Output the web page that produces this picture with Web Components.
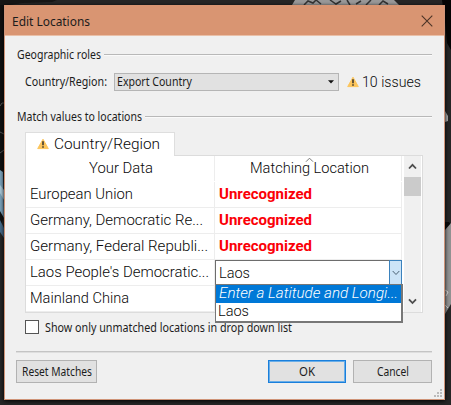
<!DOCTYPE html>
<html lang="en">
<head>
<meta charset="utf-8">
<title>Edit Locations</title>
<style>
html, body { margin: 0; width: 451px; height: 405px; overflow: hidden; background: #262626; }
body { position: relative; font-family: "Noto Sans", sans-serif; font-size: 12px; color: #1c1c1c; }
</style>
</head>
<body>
<map-backdrop></map-backdrop>
<dialog-window></dialog-window>
<script>
// Single line of text, condensed or widened to an exact width.
class FitText extends HTMLElement {
  connectedCallback() {
    const r = this.attachShadow({ mode: 'open' });
    const w = +this.getAttribute('w'), s = this.getAttribute('size') || 12.5;
    r.innerHTML = `<style>
      :host { display: block; flex: none; width: ${w}px; height: 14px; line-height: 14px; font-size: ${s}px; white-space: nowrap; }
      :host([tab]) , :host([cell]) { font-family: Roboto, sans-serif; font-weight: 350; color: #080808; }
      :host([red]) { color: #fb0007; font-weight: 700; }
      :host([hot]) { color: #fff; font-style: italic; }
      span { display: inline-block; transform-origin: 0 50%; }
    </style><span><slot></slot></span>`;
    const sp = r.querySelector('span');
    sp.style.transform = `scaleX(${w / sp.getBoundingClientRect().width})`;
  }
}
// Helper for elements whose shadow tree is static markup.
const define = (name, html) => customElements.define(name, class extends HTMLElement {
  connectedCallback() {
    if (!this.shadowRoot) this.attachShadow({ mode: 'open' }).innerHTML = html;
  }
});

define('map-backdrop', `<style>:host{position:absolute;inset:0} svg{display:block}</style>
<svg width="451" height="405">
  <path d="M0 0H4V216L0 228Z" fill="#101010"/>
  <path d="M0 0H57L52 2L22 3L10 5H0Z" fill="#161616"/>
  <path d="M0 106L2 103L4 103M0 132L4 134M0 153L4 150" stroke="#555" fill="none"/>
  <path d="M0 170L3 172L4 218L0 211Z" fill="#7aa0b8"/><path d="M0 185L4 190V200L0 193Z" fill="#a9c6d6"/>
  <path d="M0 220L4 228V238L0 232Z" fill="#466a88"/>
  <path d="M292 5L295 0H394L399 5Z" fill="#999"/>
  <path d="M304 5L308 1L313 3L316 0L321 4M330 0L336 4L341 1M347 0L350 5M356 4L361 1M366 5L371 0M379 5L383 1L388 4" stroke="#333" stroke-width="1.5" fill="none"/>
  <path d="M442 0H451V50L447 43L445 22Z" fill="#050505"/>
  <path d="M445 111L448 116L448 121L445 122Z" fill="#aaa"/>
  <path d="M445 222H449L451 225L447 230H445Z" fill="#080808"/>
  <path d="M445 230L451 223V304L445 314Z" fill="#929292"/>
  <path d="M445 290L448 292L446 296M445 305L448 308" stroke="#ddd" fill="none"/>
</svg>`);

define('warn-icon', `<style>:host{display:block;flex:none;width:12px;height:12px} svg{display:block}</style>
<svg width="12" height="12" viewBox="0 0 12 12"><path d="M6 1.2L11.3 10.6H.7Z" fill="#fcc55c" stroke="#fcc55c" stroke-width="1" stroke-linejoin="round"/><path d="M6 3.2V7.2M6 8.3V9.8" stroke="#33302a" stroke-width="1.5"/></svg>`);

define('group-title', `<style>
:host{display:flex;align-items:center;gap:3px;height:16px;margin:0 12px 0 12px}
i{flex:1;height:1px;background:#b8b8b8;box-shadow:0 1px #fafafa}</style><slot></slot><i></i>`);

define('push-button', `<style>
:host{display:flex;box-sizing:border-box;height:23px;border:1px solid #b2b2b2;background:#e1e1e1;align-items:center;justify-content:center}
:host([primary]){border:1px solid #1a7fdb;box-shadow:inset 0 0 0 1px #6aaee8}</style><slot></slot>`);

define('title-bar', `<style>
:host{display:flex;background:#d99572;justify-content:space-between;align-items:center;padding:2px 11px 0 7px;box-sizing:border-box;height:31px;border-bottom:1px solid #e9c0a8}
svg{display:block}</style>
<fit-text w="78" size="13">Edit Locations</fit-text>
<svg width="12" height="12"><path d="M.7 .7L11.3 11.3M11.3 .7L.7 11.3" stroke="#4c3427" stroke-width="1.1"/></svg>`);

define('role-select', `<style>
:host{display:flex;box-sizing:border-box;width:225px;height:18px;border:1px solid #b5b5b5;background:#e1e1e1;align-items:center;justify-content:space-between;padding:0 4px 0 2px}</style>
<fit-text w="75">Export Country</fit-text><svg width="6" height="4"><path d="M0 .3H6L3 3.6Z" fill="#111"/></svg>`);

define('scroll-bar', `<style>
:host{display:flex;flex-direction:column;box-sizing:border-box;width:17px;height:156px;background:#f0f0f0;align-items:center;padding:7px 0 7px}
i{width:17px;height:19px;background:#cbcbcb;margin-top:7px;margin-bottom:auto} svg{display:block;flex:none}</style>
<svg width="9" height="7"><path d="M1 5.5L4.5 1.8L8 5.5" fill="none" stroke="#4d4d4d" stroke-width="1.8"/></svg><i></i>
<svg width="9" height="7"><path d="M1 1.3L4.5 5L8 1.3" fill="none" stroke="#4d4d4d" stroke-width="1.8"/></svg>`);

define('data-row', `<style>
:host{display:grid;grid-template-columns:189px 187px;height:25px;border-bottom:1px solid #ededed}
div{display:flex;align-items:center;box-sizing:border-box;padding-left:4px;border-right:1px solid #ededed;min-width:0}
div:first-child{padding-left:5.5px}
:host([head]){border-bottom-color:#fff}:host([head]) div{justify-content:center;padding:1px 0 0 2px}</style>
<div><slot></slot></div><div><slot name="match"></slot></div>`);

define('combo-cell', `<style>
:host{position:relative;display:block;margin-left:-4px;width:187px;height:26px;box-sizing:border-box;flex:none;margin-right:-1px}
.box{display:flex;box-sizing:border-box;height:26px;border:1px solid #6d6d6d;background:#fff;align-items:center;justify-content:space-between;padding-left:3px}
.arrow{width:13px;height:26px;box-sizing:border-box;border:1px solid #3b82bd;background:#cce4f7;margin-right:-1px;display:grid;place-items:center}
.list{position:absolute;left:0;top:24px;width:188px;height:39px;box-sizing:border-box;border:1px solid #777;border-right-width:2px;border-bottom-width:2px;background:#fff;z-index:3}
.opt{height:18px;display:flex;align-items:center;padding-left:2px}.hot{background:#0078d7;padding-left:3px;height:18px}</style>
<div class="box"><fit-text cell w="31" size="15">Laos</fit-text><div class="arrow"><svg width="8" height="6"><path d="M.7 1L4 4.5L7.3 1" fill="none" stroke="#4c6274" stroke-width="1"/></svg></div></div>
<div class="list"><div class="opt hot"><fit-text cell hot w="179" size="14.5">Enter a Latitude and Longi...</fit-text></div><div class="opt"><fit-text cell w="31" size="14.5">Laos</fit-text></div></div>`);

define('location-table', `<style>
:host{display:block;margin-left:20px;width:398px}
.tab{display:flex;align-items:center;gap:5px;box-sizing:border-box;width:150px;height:23px;background:#fff;border:1px solid #dedede;border-bottom:0;padding:0 0 0 11px}
.grid{position:relative;display:flex;box-sizing:border-box;height:158px;border:1px solid #dcdcdc;background:#fff;justify-content:space-between;padding-right:1px}
.join{position:absolute;left:0;top:-1px;width:148px;height:1px;background:#fff}
.sort{position:absolute;left:279px;top:1px}
.rows{width:376px}</style>
<div class="tab"><warn-icon></warn-icon><fit-text tab w="106" size="15">Country/Region</fit-text></div>
<div class="grid"><span class="join"></span>
<svg class="sort" width="9" height="6"><path d="M1 4.7L4.5 1.2L8 4.7" fill="none" stroke="#777"/></svg>
<div class="rows">
<data-row head><fit-text cell w="64" size="14.5">Your Data</fit-text><fit-text slot="match" cell w="119" size="14.5">Matching Location</fit-text></data-row>
<data-row><fit-text cell w="103" size="14.5">European Union</fit-text><fit-text slot="match" cell red w="93" size="14.5">Unrecognized</fit-text></data-row>
<data-row><fit-text cell w="173" size="14.5">Germany, Democratic Re...</fit-text><fit-text slot="match" cell red w="93" size="14.5">Unrecognized</fit-text></data-row>
<data-row><fit-text cell w="178" size="14.5">Germany, Federal Republi...</fit-text><fit-text slot="match" cell red w="93" size="14.5">Unrecognized</fit-text></data-row>
<data-row><fit-text cell w="179" size="14.5">Laos People's Democratic...</fit-text><combo-cell slot="match"></combo-cell></data-row>
<data-row><fit-text cell w="99" size="14.5">Mainland China</fit-text></data-row>
</div><scroll-bar></scroll-bar></div>`);

define('dialog-window', `<style>
:host{position:absolute;left:4px;top:5px;width:441px;height:395px;box-sizing:border-box;border:1px solid #cf9478;border-top-width:0;background:#f0f0f0;box-shadow:0 1px 4px #000}
group-title{margin-top:10px}
group-title fit-text{position:relative;top:1px}
.role{display:flex;align-items:center;height:18px;margin:11px 0 0 20px}
.role role-select{margin-left:7px}.role warn-icon{margin:0 3px 0 8px}
.second{margin-top:17px}
location-table{margin-top:8px}
.check{display:flex;align-items:center;gap:6px;margin:6px 0 0 20px;height:15px}
.check i{width:14px;height:14px;box-sizing:border-box;border:1px solid #555;background:#fff}
.check fit-text{position:relative;top:1px}
hr{border:0;height:1px;background:#c4c4c4;box-shadow:0 1px #dedede;margin:17px 12px 0 11px}
.buttons{display:flex;gap:7px;margin:8px 12px 0 11px}
.grip{position:absolute;right:2px;bottom:2px}</style>
<title-bar></title-bar>
<group-title><fit-text w="84">Geographic roles</fit-text></group-title>
<div class="role"><fit-text w="82">Country/Region:</fit-text><role-select></role-select><warn-icon></warn-icon><fit-text tab w="59" size="15">10 issues</fit-text></div>
<group-title class="second"><fit-text w="125">Match values to locations</fit-text></group-title>
<location-table></location-table>
<div class="check"><i></i><fit-text w="247">Show only unmatched locations in drop down list</fit-text></div>
<hr>
<div class="buttons"><push-button style="width:81px;margin-right:auto"><fit-text w="70">Reset Matches</fit-text></push-button>
<push-button primary style="width:78px"><fit-text w="16">OK</fit-text></push-button>
<push-button style="width:79px"><fit-text w="32">Cancel</fit-text></push-button></div>
<svg class="grip" width="8" height="8"><path d="M6 0h2v2H6zM3 3h2v2H3zM6 3h2v2H6zM0 6h2v2H0zM3 6h2v2H3zM6 6h2v2H6z" fill="#bbb"/></svg>`);

customElements.define('fit-text', FitText);
</script>
</body>
</html>
